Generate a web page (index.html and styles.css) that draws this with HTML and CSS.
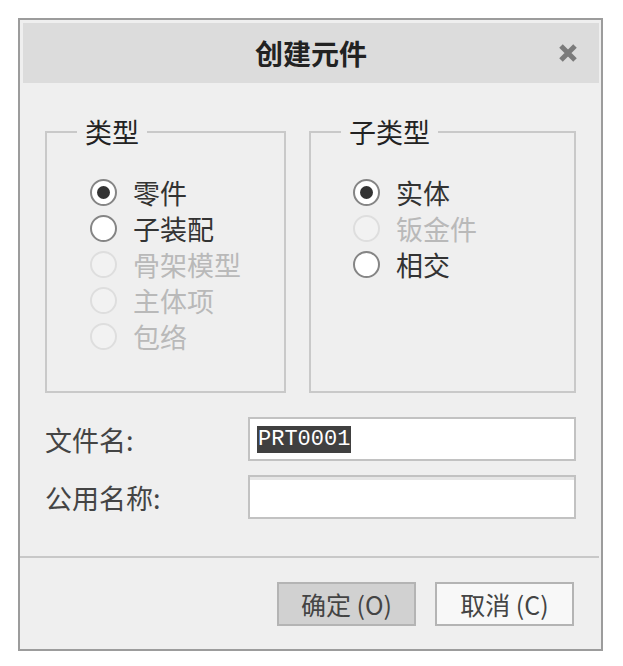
FILE: index.html
```html
<!DOCTYPE html>
<html lang="zh">
<head>
    <meta charset="UTF-8">
    <meta name="viewport" content="width=device-width, initial-scale=1.0">
    <title>创建元件</title>
    <link rel="stylesheet" href="styles.css">
</head>
<body>
    <div class="dialog">
        <div class="titlebar">
            <span></span>
            <h1 class="title">创建元件</h1>
            <svg class="close" width="18" height="18" viewBox="0 0 18 18">
                <path d="M2 2L16 16M16 2L2 16" stroke="#7b7b7b" stroke-width="5" fill="none"/>
            </svg>
        </div>
        <div class="content">
            <div class="groups">
                <fieldset class="group group-type">
                    <legend>类型</legend>
                    <div class="options">
                        <div class="option"><span class="radio checked"></span>零件</div>
                        <div class="option"><span class="radio"></span>子装配</div>
                        <div class="option disabled"><span class="radio"></span>骨架模型</div>
                        <div class="option disabled"><span class="radio"></span>主体项</div>
                        <div class="option disabled"><span class="radio"></span>包络</div>
                    </div>
                </fieldset>
                <fieldset class="group group-sub">
                    <legend>子类型</legend>
                    <div class="options">
                        <div class="option"><span class="radio checked"></span>实体</div>
                        <div class="option disabled"><span class="radio"></span>钣金件</div>
                        <div class="option"><span class="radio"></span>相交</div>
                    </div>
                </fieldset>
            </div>
            <div class="form">
                <div class="form-row">
                    <label class="label">文件名:</label>
                    <div class="field"><span class="sel">PRT0001</span></div>
                </div>
                <div class="form-row">
                    <label class="label">公用名称:</label>
                    <div class="field field-empty"></div>
                </div>
            </div>
        </div>
        <div class="footer">
            <button class="btn btn-ok">确定 (O)</button>
            <button class="btn btn-cancel">取消 (C)</button>
        </div>
    </div>
</body>
</html>
```

FILE: styles.css
```css
body{
    margin: 0;
    background: #fff;
    font-family: "Noto Sans CJK SC", "Noto Sans", sans-serif;
}
.dialog{
    width: 581px;
    margin: 18px 0 0 18px;
    border: 2px solid #9c9c9c;
    background: #efefef;
}
.titlebar{
    display: grid;
    grid-template-columns: 1fr auto 1fr;
    align-items: center;
    height: 60px;
    margin: 3px 2px 0 3px;
    background: #dcdcdc;
}
.title{
    margin: 0;
    font-size: 28px;
    font-weight: bold;
    color: #222;
    line-height: 60px;
}
.close{
    justify-self: end;
    margin-right: 22px;
}
.content{
    padding: 35px 25px 37px 25px;
}
.groups{
    display: flex;
    gap: 23px;
}
.group{
    box-sizing: border-box;
    height: 275px;
    margin: 0;
    padding: 0;
    min-width: 0;
    border: 2px solid #c9c9c9;
}
.group-type{
    width: 241px;
}
.group-sub{
    flex: 1;
}
.group legend{
    margin-left: 30px;
    padding: 0 8px;
    font-size: 27px;
    line-height: 28px;
    color: #222;
}
.options{
    padding: 28px 0 0 43px;
}
.group-sub .options{
    padding-left: 42px;
}
.option{
    display: flex;
    align-items: center;
    gap: 16px;
    height: 36px;
    font-size: 27px;
    color: #333;
}
.radio{
    box-sizing: border-box;
    width: 27px;
    height: 27px;
    border: 2px solid #858585;
    border-radius: 50%;
    background: #fff;
    display: flex;
    align-items: center;
    justify-content: center;
}
.radio.checked::after{
    content: "";
    width: 13px;
    height: 13px;
    border-radius: 50%;
    background: #333;
}
.option.disabled{
    color: #b9b9b9;
}
.option.disabled .radio{
    border-color: #dedede;
    background: #f2f2f2;
}
.form{
    display: flex;
    flex-direction: column;
    gap: 14px;
    margin-top: 24px;
}
.form-row{
    display: flex;
    align-items: center;
}
.label{
    width: 203px;
    font-size: 27px;
    color: #444;
}
.field{
    box-sizing: border-box;
    flex: 1;
    height: 44px;
    border: 2px solid #c2c2c2;
    background: #fff;
    display: flex;
    align-items: center;
    padding-left: 7px;
}
.field-empty{
    box-shadow: inset 0 3px 0 #e6e6e6;
}
.sel{
    background: #404040;
    color: #fff;
    font-family: "Liberation Mono", monospace;
    font-size: 22px;
    line-height: 27px;
    padding: 0 1px;
}
.footer{
    display: flex;
    justify-content: flex-end;
    gap: 19px;
    padding: 24px 25px 23px 0;
    border-top: 2px solid #c8c8c8;
    margin: 0 2px 0 0;
}
.btn{
    box-sizing: border-box;
    width: 139px;
    height: 44px;
    border: 2px solid #b4b4b4;
    font-family: "Noto Sans CJK SC", "Noto Sans", sans-serif;
    font-size: 25px;
    color: #444;
    padding: 0;
}
.btn-ok{
    background: #d1d1d1;
}
.btn-cancel{
    background: #f8f8f8;
}
```
